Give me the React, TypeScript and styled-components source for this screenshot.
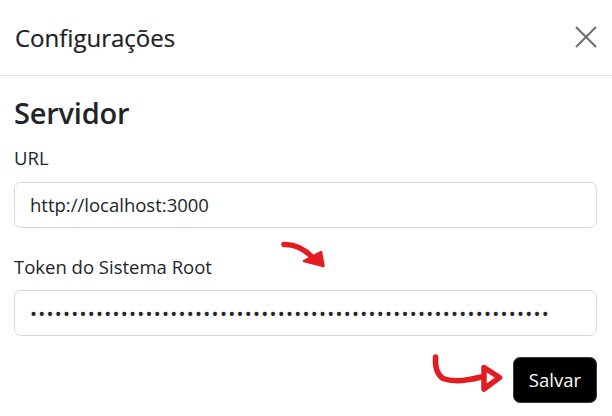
import React from "react";
import styled, { createGlobalStyle } from "styled-components";

const GlobalStyle = createGlobalStyle`
  html, body {
    margin: 0;
    padding: 0;
    background: #ffffff;
  }
  body {
    font-family: "Open Sans", "Noto Sans", Arial, sans-serif;
    color: #212529;
  }
  * { box-sizing: border-box; }
`;

const Modal = styled.div`
  position: relative;
  width: 612px;
  height: 416px;
  background: #ffffff;
  overflow: hidden;
`;

const Header = styled.header`
  display: flex;
  align-items: center;
  justify-content: space-between;
  height: 76px;
  padding: 0 14px 0 15px;
  border-bottom: 1px solid #dee2e6;
`;

const Title = styled.h5`
  margin: 0;
  font-size: 24px;
  font-weight: 500;
  line-height: 1.5;
  color: #1d2125;
  -webkit-text-stroke: 0.2px #1d2125;
`;

const CloseButton = styled.button`
  display: flex;
  align-items: center;
  justify-content: center;
  width: 24px;
  height: 24px;
  padding: 0;
  margin-top: -2px;
  border: none;
  background: transparent;
  color: #6f6f6f;
  cursor: pointer;
`;

const Body = styled.main`
  display: flex;
  flex-direction: column;
  padding: 20px 15px 0 14px;
`;

const SectionTitle = styled.h4`
  margin: 0 0 13px;
  font-size: 29px;
  font-weight: 600;
  line-height: 1.2;
  letter-spacing: -0.2px;
  color: #212529;
`;

const Field = styled.div<{ $gap: number }>`
  display: flex;
  flex-direction: column;
  margin-bottom: ${(p) => p.$gap}px;
`;

const Label = styled.label`
  display: block;
  margin-bottom: 10px;
  font-size: 18.5px;
  line-height: 1.5;
  color: #212529;
`;

const Input = styled.input<{ $masked?: boolean }>`
  display: block;
  width: 100%;
  height: 46px;
  padding: 0 15px;
  border: 1px solid #d6d9de;
  border-radius: 7px;
  background: #ffffff;
  font-family: "Open Sans", "Noto Sans", Arial, sans-serif;
  font-size: 18.5px;
  color: #212529;
  outline: none;
  letter-spacing: ${(p) => (p.$masked ? "1.3px" : "0")};
`;

const Footer = styled.footer`
  display: flex;
  justify-content: flex-end;
  padding: 0 15px 0 14px;
`;

const SaveButton = styled.button`
  height: 46px;
  padding: 0 15px;
  border: 1px solid #3c3c3c;
  border-radius: 7px;
  background: #000000;
  color: #ffffff;
  font-family: "Open Sans", "Noto Sans", Arial, sans-serif;
  font-size: 18.5px;
  line-height: 1;
  cursor: pointer;
`;

const Annotation = styled.svg`
  position: absolute;
  left: 0;
  top: 0;
  width: 612px;
  height: 416px;
  pointer-events: none;
`;

const CloseIcon = () => (
  <svg width="22" height="22" viewBox="0 0 22 22" fill="none">
    <path d="M1 1 L21 21 M21 1 L1 21" stroke="currentColor" strokeWidth="2.1" />
  </svg>
);

export default function App() {
  const token = "x".repeat(63);
  return (
    <>
      <GlobalStyle />
      <Modal>
        <Header>
          <Title>Configurações</Title>
          <CloseButton aria-label="Fechar">
            <CloseIcon />
          </CloseButton>
        </Header>
        <Body>
          <SectionTitle>Servidor</SectionTitle>
          <Field $gap={25}>
            <Label htmlFor="url">URL</Label>
            <Input id="url" type="text" defaultValue="http://localhost:3000" />
          </Field>
          <Field $gap={21}>
            <Label htmlFor="token">Token do Sistema Root</Label>
            <Input id="token" type="password" $masked defaultValue={token} />
          </Field>
        </Body>
        <Footer>
          <SaveButton>Salvar</SaveButton>
        </Footer>
        <Annotation viewBox="0 0 612 416">
          <g stroke="#e31b22" strokeWidth="5.5" strokeLinecap="round" strokeLinejoin="round" fill="none">
            <path d="M284 244.5 C296 244 305 249 314 259" />
            <path d="M435.5 357 C435 366 436 374 443 378.5 C452 382 466 381 481 377" />
            <path d="M484 367.5 L499.5 377.5 L484 389 Z" />
          </g>
          <path d="M304 261 L321 252 L323.5 266 Z" fill="#e31b22" stroke="#e31b22" strokeWidth="2.5" strokeLinejoin="round" />
        </Annotation>
      </Modal>
    </>
  );
}
